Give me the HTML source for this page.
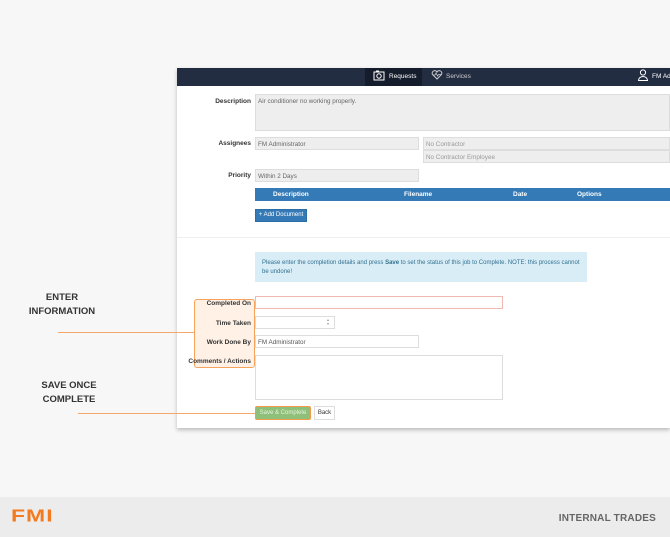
<!DOCTYPE html>
<html><head><meta charset="utf-8"><style>
*{margin:0;padding:0;box-sizing:border-box}
body{width:670px;height:537px;background:#f7f7f7;font-family:"Liberation Sans",sans-serif;position:relative;overflow:hidden}
.a{position:absolute}
.panel{left:177px;top:68px;width:493px;height:360px;background:#fff;box-shadow:0 2px 4px rgba(0,0,0,.25)}
.nav{left:177px;top:68px;width:493px;height:18px;background:#222d42}
.lbl{font-size:6.5px;font-weight:bold;color:#333;text-align:right;width:120px}
.inp{background:#eee;border:1px solid #ddd;font-size:6.3px;color:#666;padding:3px 2px}
.winp{background:#fff;border:1px solid #ddd;font-size:6.3px;color:#555;padding:3px 2px}
.th{font-size:6.5px;font-weight:bold;color:#fff;top:191px}
.big{font-size:9.5px;font-weight:bold;color:#333;text-align:center;line-height:14px}
</style></head><body>
<div class="a panel"></div>
<div class="a nav"></div>
<div class="a" style="left:365px;top:68px;width:57px;height:18px;background:#151c2b"></div>
<svg class="a" style="left:373px;top:70px" width="12" height="11" viewBox="0 0 12 11"><rect x="1" y="2" width="10" height="8" fill="none" stroke="#fff" stroke-width="1"/><circle cx="6" cy="6" r="2.2" fill="none" stroke="#fff"/><rect x="3" y="0.5" width="3" height="1.5" fill="#fff"/></svg>
<div class="a" style="left:389px;top:73px;font-size:6.5px;color:#fff">Requests</div>
<svg class="a" style="left:431px;top:70px" width="12" height="10" viewBox="0 0 12 10"><path d="M6 9L1.5 4.5A2.5 2.5 0 0 1 6 2 2.5 2.5 0 0 1 10.5 4.5Z" fill="none" stroke="#ccc" stroke-width="1"/><path d="M2 5h2l1-2 1.5 3 1-1.5h2.5" fill="none" stroke="#ccc" stroke-width=".8"/></svg>
<div class="a" style="left:446px;top:73px;font-size:6.5px;color:#ccc">Services</div>
<svg class="a" style="left:638px;top:69px" width="10" height="12" viewBox="0 0 10 12"><circle cx="5" cy="3.5" r="2.6" fill="none" stroke="#fff"/><path d="M0.5 11.5a4.5 4 0 0 1 9 0z" fill="none" stroke="#fff"/></svg>
<div class="a" style="left:652px;top:73px;font-size:6.5px;color:#fff;white-space:nowrap">FM Ad</div>

<div class="a lbl" style="left:131px;top:98px">Description</div>
<div class="a inp" style="left:255px;top:94px;width:415px;height:37px">Air conditioner no working properly.</div>
<div class="a lbl" style="left:131px;top:140px">Assignees</div>
<div class="a inp" style="left:255px;top:137px;width:164px;height:13px">FM Administrator</div>
<div class="a inp" style="left:423px;top:137px;width:247px;height:13px;color:#999">No Contractor</div>
<div class="a inp" style="left:423px;top:150px;width:247px;height:13px;color:#999">No Contractor Employee</div>
<div class="a lbl" style="left:131px;top:172px">Priority</div>
<div class="a inp" style="left:255px;top:169px;width:164px;height:13px">Within 2 Days</div>
<div class="a" style="left:255px;top:188px;width:415px;height:13px;background:#337ab7"></div>
<div class="a th" style="left:273px">Description</div>
<div class="a th" style="left:404px">Filename</div>
<div class="a th" style="left:513px">Date</div>
<div class="a th" style="left:577px">Options</div>
<div class="a" style="left:255px;top:209px;width:52px;height:13px;background:#337ab7;border:1px solid #2e6da4;color:#fff;font-size:6px;line-height:11px;text-align:center">+ Add Document</div>
<div class="a" style="left:177px;top:237px;width:493px;height:1px;background:#eee"></div>
<div class="a" style="left:255px;top:252px;width:332px;height:30px;background:#d9edf7;color:#31708f;font-size:6px;line-height:9px;padding:7px 7px">Please enter the completion details and press <b>Save</b> to set the status of this job to Complete. NOTE: this process cannot be undone!</div>

<div class="a" style="left:194px;top:299px;width:61px;height:69px;background:#fff1e6;border:1px solid #f7a35c;border-radius:3px"></div>
<div class="a lbl" style="left:131px;top:300px">Completed On</div>
<div class="a winp" style="left:255px;top:296px;width:248px;height:13px;border-color:#f0b8b0"></div>
<div class="a lbl" style="left:131px;top:320px">Time Taken</div>
<div class="a winp" style="left:255px;top:316px;width:80px;height:13px"></div>
<div class="a" style="left:327px;top:318px;font-size:4px;color:#999;line-height:4px">▴<br>▾</div>
<div class="a lbl" style="left:131px;top:339px">Work Done By</div>
<div class="a winp" style="left:255px;top:335px;width:164px;height:13px">FM Administrator</div>
<div class="a lbl" style="left:131px;top:358px">Comments / Actions</div>
<div class="a winp" style="left:255px;top:355px;width:248px;height:45px"></div>
<div class="a" style="left:255px;top:406px;width:56px;height:14px;background:#8fc07a;border:1px solid #f59a4a;border-radius:2px;color:#e8f3e0;font-size:6px;line-height:12px;text-align:center">Save &amp; Complete</div>
<div class="a" style="left:314px;top:406px;width:21px;height:14px;background:#fff;border:1px solid #ddd;color:#333;font-size:6px;line-height:12px;text-align:center">Back</div>

<div class="a" style="left:58px;top:332px;width:136px;height:1px;background:#f5a66b"></div>
<div class="a" style="left:78px;top:413px;width:177px;height:1px;background:#f5a66b"></div>
<div class="a big" style="left:12px;top:291px;width:100px">ENTER<br>INFORMATION</div>
<div class="a big" style="left:19px;top:379px;width:100px">SAVE ONCE<br>COMPLETE</div>

<div class="a" style="left:0;top:497px;width:670px;height:40px;background:#ececec"></div>
<div class="a" style="left:11px;top:505px;font-size:23px;font-weight:bold;color:#f47a20;letter-spacing:1px;transform:scaleY(.78);transform-origin:top left">FMI</div>
<div class="a" style="right:14px;top:513px;font-size:10px;font-weight:bold;color:#666;letter-spacing:.2px">INTERNAL TRADES</div>
</body></html>
